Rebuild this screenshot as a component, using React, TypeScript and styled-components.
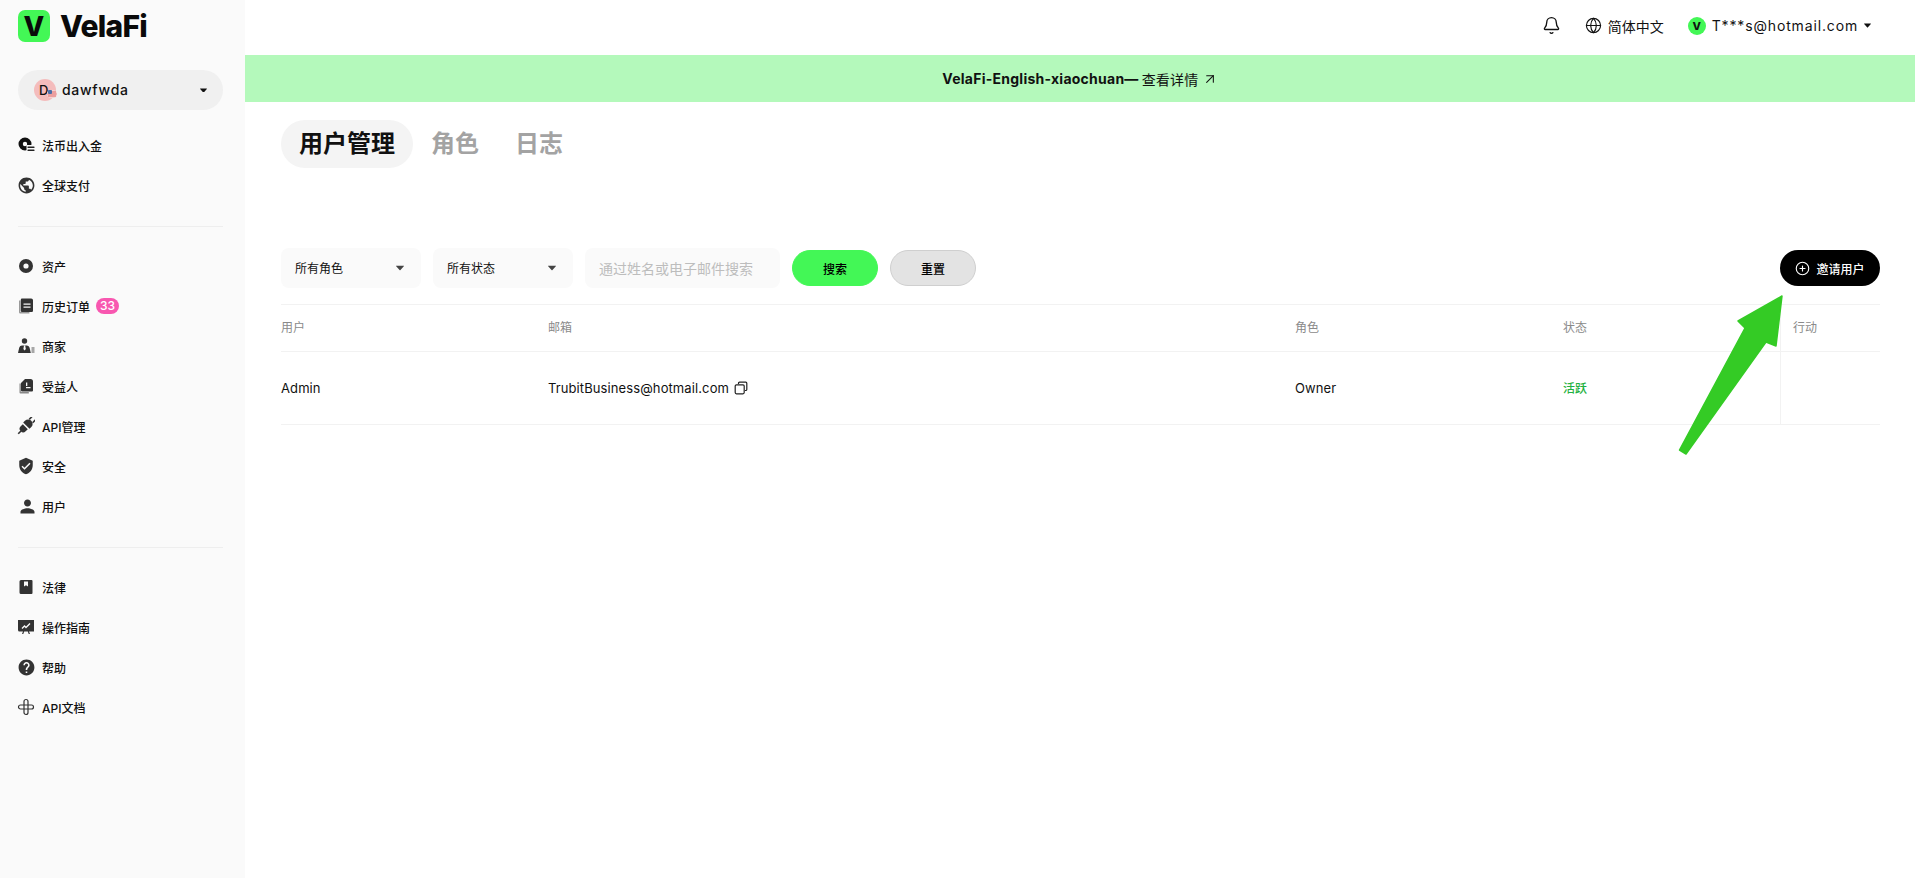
import React from "react"
import styled, { createGlobalStyle } from "styled-components"
import { MdPublic, MdVerifiedUser, MdPerson, MdHelp } from "react-icons/md"
import { Bell, Globe, ArrowUpRight, CirclePlus } from "lucide-react"

const FONT = `Inter, "Noto Sans CJK SC", sans-serif`

const GlobalStyle = createGlobalStyle`
    html, body {
        margin: 0;
        padding: 0;
        background: #fff;
        font-family: ${FONT};
        color: #111;
        overflow: hidden;
    }
    * { box-sizing: border-box; }
`

const FiatIcon = () => (
    <svg width="18" height="18" viewBox="0 0 18 18">
        <path fill="#111" fillRule="evenodd" d="M8 1.500a6.500 6.500 0 1 1 0 13 6.500 6.500 0 0 1 0-13zm0 4.300a2.200 2.200 0 1 0 0 4.400 2.200 2.200 0 0 0 0-4.400z" />
        <rect x="9.500" y="9" width="8.500" height="7" fill="#fafafa" />
        <rect x="10.500" y="10.500" width="7" height="1.500" rx=".5" fill="#222" />
        <rect x="10.500" y="13.500" width="7" height="1.500" rx=".5" fill="#222" />
    </svg>
)

const AssetIcon = () => (
    <svg width="18" height="18" viewBox="0 0 18 18">
        <path fill="#333" fillRule="evenodd" d="M9 2a7 7 0 1 1 0 14A7 7 0 0 1 9 2zm0 4.400a2.600 2.600 0 1 0 0 5.200 2.600 2.600 0 0 0 0-5.200z" />
    </svg>
)

const OrderIcon = () => (
    <svg width="18" height="18" viewBox="0 0 18 18">
        <path fill="#999" d="M2 3.500h1.400V15h9v1.400H3.200A1.200 1.200 0 0 1 2 15.200z" />
        <path fill="#333" fillRule="evenodd" d="M5 1.500h9.200A1.800 1.800 0 0 1 16 3.300v10.400a1.200 1.200 0 0 1-1.200 1.200H5A1.200 1.200 0 0 1 3.800 13.700V2.700A1.200 1.200 0 0 1 5 1.500zM6.500 6.500v1.300h7V6.500zm0 3v1.300h7V9.500z" />
    </svg>
)

const MerchantIcon = () => (
    <svg width="18" height="18" viewBox="0 0 18 18">
        <circle cx="7.500" cy="4" r="2.700" fill="#333" />
        <path fill="#333" d="M1 16l1.200-5.300A3 3 0 0 1 5 8.500h5a3 3 0 0 1 2.600 2.200L13.800 16z" />
        <path fill="#fafafa" d="M7 8.500h1.200l.6 3.500-1.200 1.500-1.200-1.500z" />
        <rect x="14.500" y="10.500" width="3" height="1" fill="#555" />
        <rect x="14.500" y="12.500" width="3" height="1" fill="#555" />
        <rect x="14.500" y="14.500" width="3" height="1" fill="#555" />
    </svg>
)

const BeneficiaryIcon = () => (
    <svg width="18" height="18" viewBox="0 0 18 18">
        <path fill="#888" d="M2.500 6.500h1.300V15h8v1.500H3.500a1 1 0 0 1-1-1z" />
        <path fill="#333" fillRule="evenodd" d="M8 2h5.500A2.500 2.500 0 0 1 16 4.500v9a1 1 0 0 1-1 1H5a1 1 0 0 1-1-1V6zm1 3.500v3.500h1.300V5.500zm0 4.500v1.300h4.500V10z" />
    </svg>
)

const ApiIcon = () => (
    <svg width="18" height="18" viewBox="0 0 18 18">
        <g transform="rotate(-45 9 9)">
            <path fill="#333" d="M5 5.500h3v7H5a3.500 3.500 0 0 1 0-7z" />
            <rect x="-2" y="8.200" width="4" height="1.600" fill="#333" />
            <path fill="#333" d="M9.500 4.500h2.500a4.500 4.500 0 0 1 0 9H9.500z" />
            <rect x="16" y="5.800" width="4" height="1.600" fill="#333" />
            <rect x="16" y="10.600" width="4" height="1.600" fill="#333" />
        </g>
    </svg>
)

const LegalIcon = () => (
    <svg width="18" height="18" viewBox="0 0 18 18">
        <path fill="#333" fillRule="evenodd" d="M4 2h10.500a1 1 0 0 1 1 1v12a1 1 0 0 1-1 1H4a1.500 1.500 0 0 1-1.500-1.500v-11A1.500 1.500 0 0 1 4 2zm3 1.500v5l2-1.300 2 1.300v-5z" />
    </svg>
)

const GuideIcon = () => (
    <svg width="18" height="18" viewBox="0 0 18 18">
        <path fill="#333" d="M1 2h16v11.500h-5l1 2.500h-1.300L10.800 13.500H7.200L6.300 16H5l1-2.500H2.500A1.500 1.500 0 0 1 1 12z" />
        <path fill="none" stroke="#fafafa" strokeWidth="1.300" d="M5 10.500l2.500-2.500 1.500 1.500 4-4" />
    </svg>
)

const DocsIcon = () => (
    <svg width="18" height="18" viewBox="0 0 18 18">
        <path fill="none" stroke="#333" strokeWidth="1.200" d="M7 3.500a2 2 0 0 1 4 0V7h3.500a2 2 0 0 1 0 4H11v3.500a2 2 0 0 1-4 0V11H3.500a2 2 0 0 1 0-4H7zM7 7h4v4H7z" />
    </svg>
)

const CopyIcon = () => (
    <svg width="14" height="14" viewBox="0 0 14 14">
        <path fill="none" stroke="#222" strokeWidth="1.200" d="M4.500 3V2.200a1 1 0 0 1 1-1h6.300a1 1 0 0 1 1 1v6.300a1 1 0 0 1-1 1H11" />
        <rect x="1.200" y="3.800" width="9" height="9" rx="1.200" fill="none" stroke="#222" strokeWidth="1.200" />
    </svg>
)

const Caret = ({ size = 10, color = "#111" }: { size?: number; color?: string }) => (
    <svg width={size} height={size * 0.7} viewBox="0 0 10 7">
        <path fill={color} d="M0.500 0.800h9a.4.4 0 0 1 .3.700L5.300 6.500a.4.4 0 0 1-.6 0L.2 1.500A.4.4 0 0 1 .5.800z" />
    </svg>
)

const navGroups = [
    [
        { label: "法币出入金", icon: <FiatIcon /> },
        { label: "全球支付", icon: <MdPublic size={19} color="#333" /> },
    ],
    [
        { label: "资产", icon: <AssetIcon /> },
        { label: "历史订单", icon: <OrderIcon />, badge: "33" },
        { label: "商家", icon: <MerchantIcon /> },
        { label: "受益人", icon: <BeneficiaryIcon /> },
        { label: "API管理", icon: <ApiIcon /> },
        { label: "安全", icon: <MdVerifiedUser size={18} color="#333" /> },
        { label: "用户", icon: <MdPerson size={21} color="#333" /> },
    ],
    [
        { label: "法律", icon: <LegalIcon /> },
        { label: "操作指南", icon: <GuideIcon /> },
        { label: "帮助", icon: <MdHelp size={19} color="#333" /> },
        { label: "API文档", icon: <DocsIcon /> },
    ],
]

export default function App() {
    return (
        <Page>
            <GlobalStyle />
            <Sidebar>
                <LogoRow>
                    <LogoMark>V</LogoMark>
                    <LogoText>VelaFi</LogoText>
                </LogoRow>
                <AccountSelect>
                    <Avatar>
                        D
                        <Flag viewBox="0 0 10 8">
                            <rect width="10" height="8" rx="4" fill="#f4d4d4" />
                            <path d="M1 2h8M.5 4h9M1 6h8" stroke="#e36a6a" strokeWidth="1" />
                            <rect x="1" width="4" height="4" rx="1" fill="#4a6fa8" />
                        </Flag>
                    </Avatar>
                    <AccountName>dawfwda</AccountName>
                    <Caret size={7} />
                </AccountSelect>
                {navGroups.map((group, i) => (
                    <NavGroup key={i}>
                        {group.map((item) => (
                            <NavItem key={item.label}>
                                <NavIcon>{item.icon}</NavIcon>
                                <span>{item.label}</span>
                                {item.badge && <Badge>{item.badge}</Badge>}
                            </NavItem>
                        ))}
                    </NavGroup>
                ))}
            </Sidebar>
            <Main>
                <TopBar>
                    <Bell size={19} strokeWidth={1.7} color="#111" />
                    <LangItem>
                        <Globe size={17} strokeWidth={1.6} color="#111" />
                        简体中文
                    </LangItem>
                    <UserItem>
                        <UserDot>V</UserDot>
                        T***s@hotmail.com
                        <Caret size={7} />
                    </UserItem>
                </TopBar>
                <Banner>
                    <b>VelaFi-English-xiaochuan—</b>
                    <span>查看详情</span>
                    <ArrowUpRight size={16} strokeWidth={1.6} />
                </Banner>
                <Content>
                    <Tabs>
                        <Tab $active>用户管理</Tab>
                        <Tab>角色</Tab>
                        <Tab>日志</Tab>
                    </Tabs>
                    <Filters>
                        <SelectBox><span>所有角色</span><Caret size={8} color="#444" /></SelectBox>
                        <SelectBox><span>所有状态</span><Caret size={8} color="#444" /></SelectBox>
                        <SearchInput placeholder="通过姓名或电子邮件搜索" />
                        <PillButton $bg="#43f756">搜索</PillButton>
                        <PillButton $bg="#e3e3e3" $border="#cfcfcf">重置</PillButton>
                        <InviteButton>
                            <CirclePlus size={15} strokeWidth={1.8} />
                            邀请用户
                        </InviteButton>
                    </Filters>
                    <Table>
                        <HeadCell>用户</HeadCell>
                        <HeadCell>邮箱</HeadCell>
                        <HeadCell>角色</HeadCell>
                        <HeadCell>状态</HeadCell>
                        <HeadCell $action>行动</HeadCell>
                        <BodyCell>Admin</BodyCell>
                        <BodyCell>TrubitBusiness@hotmail.com<CopyWrap><CopyIcon /></CopyWrap></BodyCell>
                        <BodyCell>Owner</BodyCell>
                        <BodyCell $green>活跃</BodyCell>
                        <BodyCell $action />
                    </Table>
                    <Arrow viewBox="0 0 110 165">
                        <path fill="#34cb25" stroke="#34cb25" strokeWidth="1.500" strokeLinejoin="round" d="M106 4L100 54L90 50L10 162L3.500 158L69 36L62 29Z" />
                    </Arrow>
                </Content>
            </Main>
        </Page>
    )
}

const Page = styled.div`
    display: flex;
    width: 100%;
    min-height: 100vh;
`

const Sidebar = styled.aside`
    width: 245px;
    flex-shrink: 0;
    background: #fafafa;
    padding: 10px 22px 0 18px;
`

const LogoRow = styled.div`
    display: flex;
    align-items: center;
    gap: 10px;
    height: 32px;
`

const LogoMark = styled.div`
    width: 32px;
    height: 32px;
    border-radius: 7px;
    background: #43f756;
    color: #0a0a0a;
    font-size: 27px;
    font-weight: 800;
    display: flex;
    align-items: center;
    justify-content: center;
`

const LogoText = styled.div`
    font-size: 30px;
    font-weight: 800;
    letter-spacing: -0.7px;
    color: #0a0a0a;
`

const AccountSelect = styled.div`
    display: flex;
    align-items: center;
    height: 40px;
    margin-top: 28px;
    padding: 0 16px;
    border-radius: 20px;
    background: #f0f0f0;
`

const Avatar = styled.div`
    position: relative;
    width: 22px;
    height: 22px;
    border-radius: 50%;
    background: #f4bcbc;
    font-size: 13px;
    font-weight: 500;
    line-height: 22px;
    padding-left: 5px;
    flex-shrink: 0;
`

const Flag = styled.svg`
    position: absolute;
    right: -1px;
    bottom: 3px;
    width: 10px;
    height: 8px;
`

const AccountName = styled.span`
    flex: 1;
    margin: -2px 0 0 6px;
    font-size: 14px;
    font-weight: 500;
    letter-spacing: 0.7px;
`

const NavGroup = styled.nav`
    padding: 15px 0 21px;
    border-bottom: 1px solid #eeeeee;

    & + & {
        padding-top: 19px;
    }

    &:last-of-type {
        border-bottom: none;
    }
`

const NavItem = styled.div`
    display: flex;
    align-items: center;
    height: 40px;
    font-size: 12px;
    font-weight: 500;
    color: #111;
`

const NavIcon = styled.div`
    width: 25px;
    margin-left: -1px;
    display: flex;
    align-items: center;
`

const Badge = styled.span`
    margin-left: 6px;
    height: 16px;
    width: 23px;
    border-radius: 8px;
    background: #f857b0;
    color: #fff;
    font-size: 12px;
    line-height: 16px;
    text-align: center;
`

const Main = styled.main`
    flex: 1;
    min-width: 0;
`

const TopBar = styled.header`
    display: flex;
    align-items: center;
    justify-content: flex-end;
    gap: 24px;
    height: 55px;
    padding: 0 44px 4px 0;
`

const LangItem = styled.div`
    display: flex;
    align-items: center;
    gap: 6px;
    font-size: 14px;
`

const UserItem = styled(LangItem)`
    letter-spacing: 0.85px;
    gap: 6px;
`

const UserDot = styled.div`
    width: 18px;
    height: 18px;
    border-radius: 50%;
    background: #43f756;
    font-size: 11px;
    font-weight: 800;
    line-height: 18px;
    text-align: center;
    letter-spacing: 0;
`

const Banner = styled.div`
    display: flex;
    align-items: center;
    justify-content: center;
    gap: 3px;
    height: 47px;
    background: #b4f9bb;
    font-size: 14px;
    letter-spacing: 0.25px;
`

const Content = styled.div`
    position: relative;
    padding: 18px 35px 0 36px;
`

const Tabs = styled.div`
    display: flex;
    gap: 0;
    height: 48px;
`

const Tab = styled.div<{ $active?: boolean }>`
    padding: 0 18px;
    border-radius: 24px;
    font-size: 24px;
    font-weight: 600;
    line-height: 48px;
    background: ${(p) => (p.$active ? "#f4f4f4" : "transparent")};
    color: ${(p) => (p.$active ? "#111" : "#a3a3a3")};
`

const Filters = styled.div`
    display: flex;
    align-items: center;
    gap: 12px;
    margin-top: 80px;
    height: 40px;
`

const SelectBox = styled.div`
    display: flex;
    align-items: center;
    justify-content: space-between;
    width: 140px;
    height: 40px;
    padding: 0 17px 0 14px;
    border-radius: 8px;
    background: #fafafa;
    font-size: 12px;

    span {
        margin-top: -2px;
    }
`

const SearchInput = styled.input`
    width: 195px;
    height: 40px;
    padding: 0 14px;
    border: none;
    outline: none;
    border-radius: 8px;
    background: #fafafa;
    font-family: ${FONT};
    font-size: 14px;

    &::placeholder {
        color: #bdbdbd;
    }
`

const PillButton = styled.button<{ $bg: string; $border?: string }>`
    width: 86px;
    height: 36px;
    border-radius: 18px;
    border: 1px solid ${(p) => p.$border ?? p.$bg};
    background: ${(p) => p.$bg};
    color: #000;
    font-family: ${FONT};
    font-size: 12px;
    font-weight: 500;
`

const InviteButton = styled.button`
    display: flex;
    align-items: center;
    justify-content: center;
    gap: 6px;
    width: 100px;
    height: 36px;
    margin-left: auto;
    border: none;
    border-radius: 18px;
    background: #000;
    color: #fff;
    font-family: ${FONT};
    font-size: 12px;
    font-weight: 500;
`

const Table = styled.div`
    display: grid;
    grid-template-columns: 267px 747px 268px 217px 100px;
    margin-top: 16px;
    border-top: 1px solid #f2f2f2;
`

const HeadCell = styled.div<{ $action?: boolean }>`
    height: 47px;
    display: flex;
    align-items: center;
    padding-bottom: 4px;
    font-size: 12px;
    color: #8a8a8a;
    border-bottom: 1px solid #f2f2f2;
    padding-left: ${(p) => (p.$action ? "12px" : "0")};
    border-left: ${(p) => (p.$action ? "1px solid #f2f2f2" : "none")};
`

const BodyCell = styled.div<{ $action?: boolean; $green?: boolean }>`
    height: 73px;
    display: flex;
    align-items: center;
    padding-bottom: 1px;
    letter-spacing: 0.1px;
    color: ${(p) => (p.$green ? "#1fb141" : "#111")};
    font-size: ${(p) => (p.$green ? "12px" : "13px")};
    font-weight: ${(p) => (p.$green ? 500 : 400)};
    border-bottom: 1px solid #f2f2f2;
    border-left: ${(p) => (p.$action ? "1px solid #f2f2f2" : "none")};
`

const CopyWrap = styled.span`
    display: flex;
    margin-left: 5px;
`

const Arrow = styled.svg`
    position: absolute;
    left: 1431px;
    top: 190px;
    width: 110px;
    height: 165px;
`
